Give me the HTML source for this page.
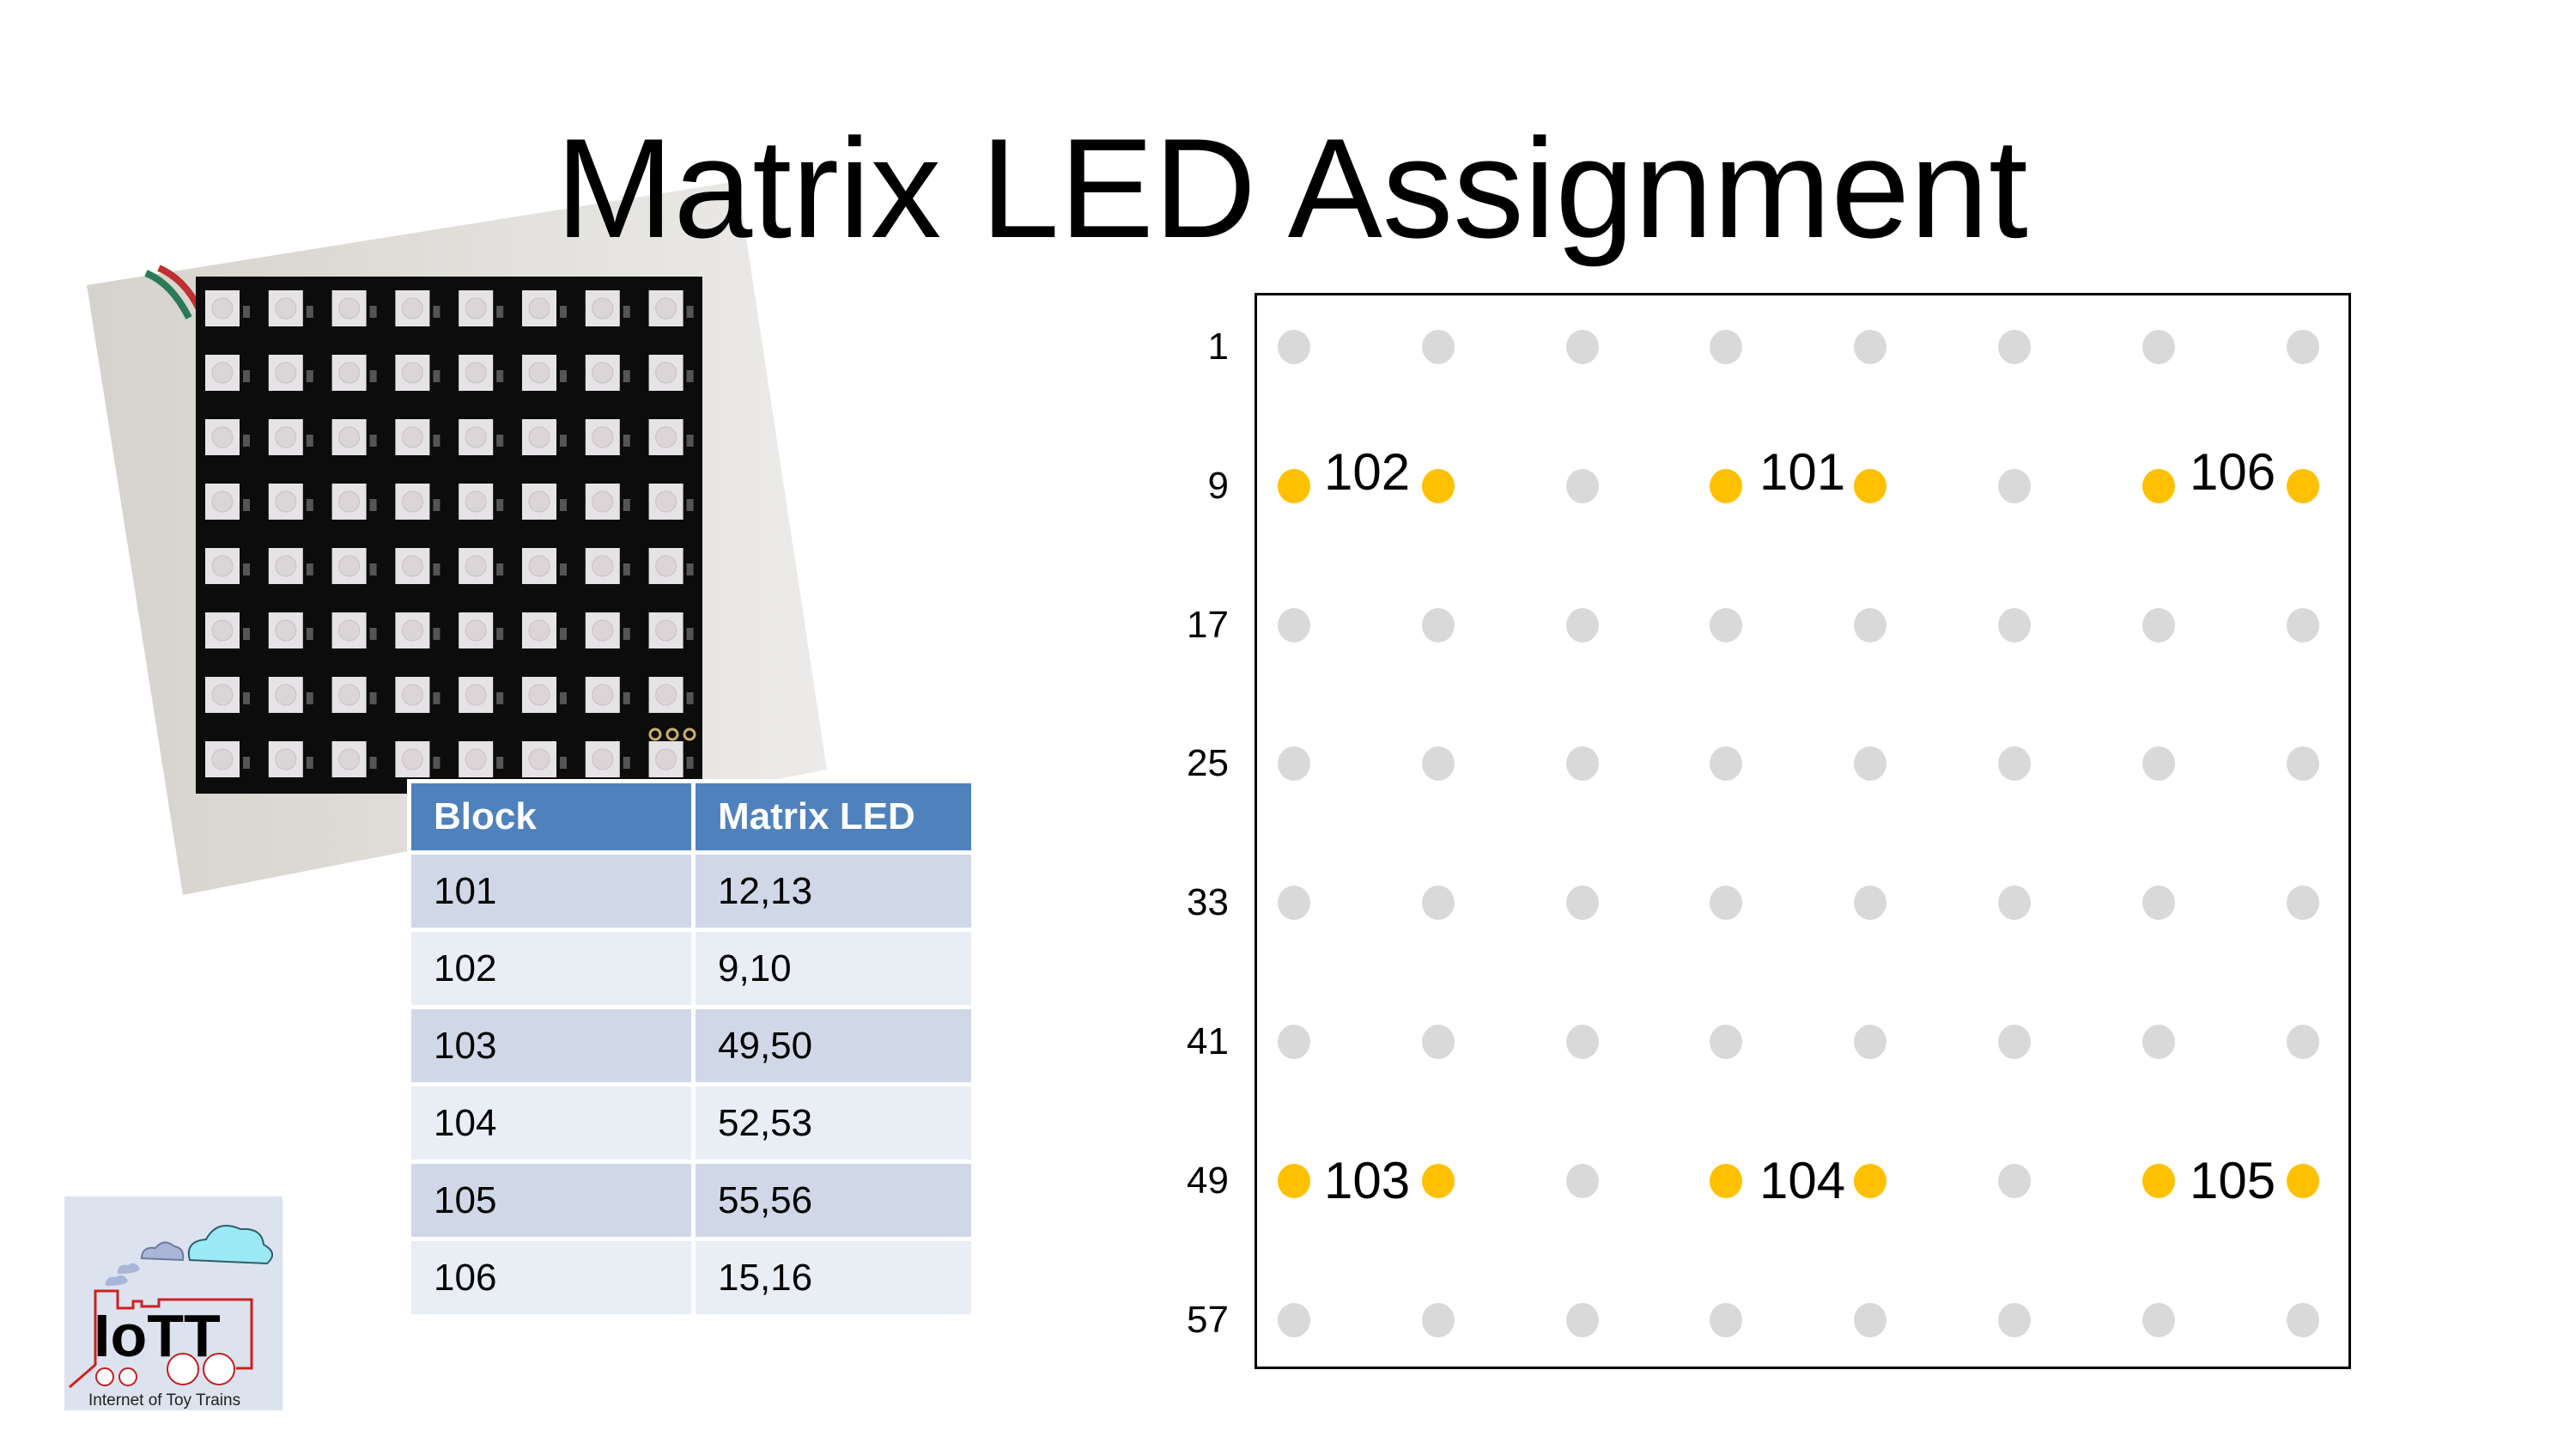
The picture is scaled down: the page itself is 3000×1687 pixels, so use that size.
<!DOCTYPE html>
<html><head><meta charset="utf-8"><style>
html,body{margin:0;padding:0;background:#fff;}
body{width:3000px;height:1687px;position:relative;overflow:hidden;font-family:"Liberation Sans",sans-serif;}
.a{position:absolute;}
.title{left:647px;top:137px;font-size:165px;line-height:165px;color:#000;white-space:nowrap;}
table{border-collapse:collapse;position:absolute;left:474px;top:907px;width:662px;font-size:44px;}
td{border:5px solid #fff;padding:0 0 0 26px;height:85px;color:#000;}
th{border:5px solid #fff;padding:0 0 0 26px;height:78px;background:#4f81bd;color:#fff;text-align:left;font-weight:bold;}
tr.o td{background:#d0d8e8;} tr.e td{background:#e9edf4;}
.lbl{font-size:44px;line-height:44px;text-align:right;width:80px;}
.bl{font-size:60px;line-height:60px;}
</style></head><body>
<svg class="a" style="left:0;top:0" width="3000" height="1687">
  <defs><linearGradient id="pg" x1="0" y1="0" x2="1" y2="0"><stop offset="0" stop-color="#d6d2cc"/><stop offset="1" stop-color="#ecebe9"/></linearGradient></defs>
  <polygon points="101,332 859,211 963,896 213,1042" fill="url(#pg)"/>
  <path d="M170,318 Q200,330 220,370" stroke="#2a7a55" stroke-width="8" fill="none"/>
  <path d="M185,312 Q215,325 232,360" stroke="#c03030" stroke-width="8" fill="none"/>
  <rect x="228" y="322" width="590" height="602" fill="#0c0c0c"/>
  <g id="leds"></g>
</svg>
<div class="a title">Matrix LED Assignment</div>
<table>
<tr><th style="width:300px">Block</th><th>Matrix LED</th></tr>
<tr class="o"><td>101</td><td>12,13</td></tr>
<tr class="e"><td>102</td><td>9,10</td></tr>
<tr class="o"><td>103</td><td>49,50</td></tr>
<tr class="e"><td>104</td><td>52,53</td></tr>
<tr class="o"><td>105</td><td>55,56</td></tr>
<tr class="e"><td>106</td><td>15,16</td></tr>
</table>
<div class="a" style="left:1461px;top:341px;width:1271px;height:1247px;border:3px solid #000;"></div>
<div id="grid"></div>
<svg class="a" style="left:75px;top:1393px" width="254" height="249" viewBox="0 0 254 249">
  <rect width="254" height="249" fill="#dce3ee"/>
  <path d="M146,74 Q140,52 165,50 Q178,26 205,38 Q230,36 232,56 Q250,66 236,78 Z" fill="#9be9f7" stroke="#2f5f6a" stroke-width="2"/>
  <path d="M90,72 Q90,58 106,60 Q116,48 128,58 Q140,60 138,74 Z" fill="#a9b6d8" stroke="#6c7aa0" stroke-width="2"/>
  <path d="M62,86 Q64,78 74,80 Q82,74 88,84 Q86,90 62,90 Z" fill="#a9b6d8"/>
  <path d="M48,100 Q50,92 60,94 Q68,88 74,98 Q72,104 48,104 Z" fill="#a9b6d8"/>
  <path d="M6,222 L36,196 L36,110 L62,110 L62,130 L80,130 L80,122 L90,122 L90,128 L110,128 L110,120 L218,120 L218,200 L200,200" fill="none" stroke="#d02020" stroke-width="3"/>
  <text x="34" y="186" font-family="Liberation Sans,sans-serif" font-weight="bold" font-size="70" fill="#000">IoTT</text>
  <circle cx="47" cy="210" r="10" fill="#fff" stroke="#c02020" stroke-width="2"/>
  <circle cx="74" cy="210" r="10" fill="#fff" stroke="#c02020" stroke-width="2"/>
  <circle cx="138" cy="201" r="18" fill="#fff" stroke="#c02020" stroke-width="2"/>
  <circle cx="180" cy="201" r="18" fill="#fff" stroke="#c02020" stroke-width="2"/>
  <text x="28" y="243" font-family="Liberation Sans,sans-serif" font-size="19" fill="#222">Internet of Toy Trains</text>
</svg>
<script>
var g=document.getElementById('leds'),s='';
for(var r=0;r<8;r++)for(var c=0;c<8;c++){var x=239+c*73.8,y=338+r*75;
s+='<rect x="'+x+'" y="'+y+'" width="40" height="42" fill="#e6e3e6"/><circle cx="'+(x+20)+'" cy="'+(y+21)+'" r="12" fill="#dcd5d8" stroke="#c8c0c4"/><rect x="'+(x+44)+'" y="'+(y+18)+'" width="8" height="14" fill="#555"/>';}
s+='<circle cx="763" cy="855" r="6" fill="none" stroke="#c9b070" stroke-width="3"/><circle cx="783" cy="855" r="6" fill="none" stroke="#c9b070" stroke-width="3"/><circle cx="803" cy="855" r="6" fill="none" stroke="#c9b070" stroke-width="3"/>';
g.innerHTML=s;
var h='',labs=[1,9,17,25,33,41,49,57];
for(var r=0;r<8;r++){var cy=404+r*161.8;
h+='<div class="a lbl" style="left:1351px;top:'+(cy-22)+'px">'+labs[r]+'</div>';
for(var c=0;c<8;c++){var cx=1507+c*167.8;var y=(r==1||r==6)&&[0,1,3,4,6,7].indexOf(c)>=0;
h+='<div class="a" style="left:'+(cx-19)+'px;top:'+(cy-20)+'px;width:38px;height:40px;border-radius:50%;background:'+(y?'#ffc000':'#d9d9d9')+'"></div>';}}
var bl=[[1,1542,'102',-46],[1,2049,'101',-46],[1,2550,'106',-46],[6,1542,'103',-30],[6,2049,'104',-30],[6,2550,'105',-30]];
bl.forEach(function(b){var cy=404+b[0]*161.8;h+='<div class="a bl" style="left:'+b[1]+'px;top:'+(cy+b[3])+'px">'+b[2]+'</div>';});
document.getElementById('grid').innerHTML=h;
</script>
</body></html>
